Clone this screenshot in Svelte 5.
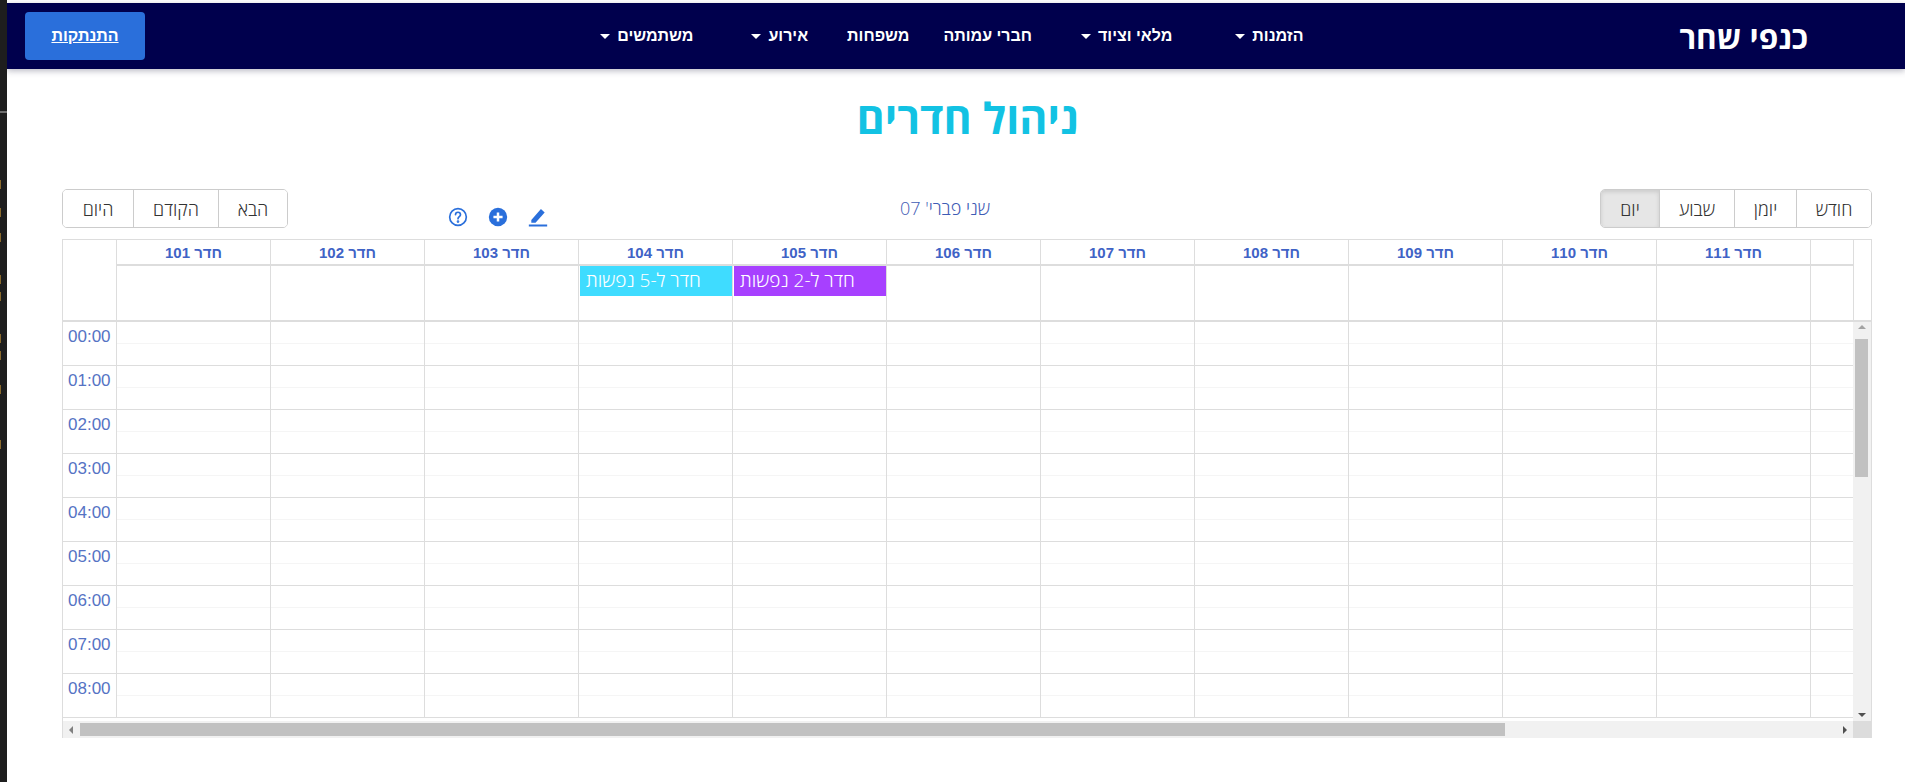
<script>
	const navItems = [
		{ label: 'הזמנות', caret: true },
		{ label: 'מלאי וציוד', caret: true },
		{ label: 'חברי עמותה', caret: false },
		{ label: 'משפחות', caret: false },
		{ label: 'אירוע', caret: true },
		{ label: 'משתמשים', caret: true }
	];

	const rooms = [101, 102, 103, 104, 105, 106, 107, 108, 109, 110, 111];
	const hours = ['00:00', '01:00', '02:00', '03:00', '04:00', '05:00', '06:00', '07:00', '08:00'];
	const events = { 104: { title: 'חדר ל-5 נפשות', color: '#3fdcff' }, 105: { title: 'חדר ל-2 נפשות', color: '#a740ff' } };

	// bits of the editor window showing behind the page
	const marks = [180, 208, 233, 275, 292, 334, 351, 385, 440];
</script>

<div class="desktop">
	<aside class="behind">
		<span class="behind-bar"></span>
		{#each marks as top}
			<span class="mark" style="top: {top}px"></span>
		{/each}
	</aside>

	<div class="page">
		<nav class="navbar" dir="rtl">
			<a class="brand" href="#top">כנפי שחר</a>
			<ul class="menu">
				{#each navItems as item}
					<li class="menu-item" class:has-caret={item.caret}>
						{item.label}
						{#if item.caret}<span class="caret"></span>{/if}
					</li>
				{/each}
			</ul>
			<a class="logout" href="#top">התנתקות</a>
		</nav>

		<h1 class="title" dir="rtl">ניהול חדרים</h1>

		<section class="calendar">
			<div class="toolbar">
				<div class="btn-group">
					<button class="w-today" dir="rtl">היום</button>
					<button class="w-prev" dir="rtl">הקודם</button>
					<button class="w-next" dir="rtl">הבא</button>
				</div>

				<div class="actions">
					<svg width="20" height="20" viewBox="0 0 24 24" fill="none" stroke="#2a6fdb" stroke-width="2">
						<circle cx="12" cy="12" r="10" />
						<path d="M9 9.3a3 3 0 0 1 6 0c0 2-3 2.4-3 4.7" stroke-linecap="round" />
						<circle cx="12" cy="17.5" r="0.6" fill="#2a6fdb" />
					</svg>
					<svg width="20" height="20" viewBox="0 0 24 24">
						<circle cx="12" cy="12" r="11" fill="#2a6fdb" />
						<path d="M12 6.5v11M6.5 12h11" stroke="#fff" stroke-width="3" />
					</svg>
					<svg width="20" height="20" viewBox="0 0 24 24" fill="#2a6fdb">
						<path d="M4 15.5 15.5 2.5l4.5 4L9 19H4z" />
						<path d="M1 21h22v2.4H1z" />
					</svg>
				</div>

				<div class="date" dir="rtl">שני פברי' 07</div>

				<div class="btn-group views">
					<button class="w-day active" dir="rtl">יום</button>
					<button class="w-week" dir="rtl">שבוע</button>
					<button class="w-agenda" dir="rtl">יומן</button>
					<button class="w-month" dir="rtl">חודש</button>
				</div>
			</div>

			<div class="grid">
				<div class="head-row">
					<div class="axis"></div>
					{#each rooms as room}
						<div class="room-head" dir="rtl">חדר {room}</div>
					{/each}
					<div class="filler"></div>
				</div>

				<div class="allday-row">
					<div class="axis"></div>
					{#each rooms as room}
						<div class="allday-cell">
							{#if events[room]}
								<div class="event" dir="rtl" style="background: {events[room].color}">{events[room].title}</div>
							{/if}
						</div>
					{/each}
					<div class="filler"></div>
				</div>

				<div class="body">
					<div class="scroll-area">
						{#each hours as hour}
							<div class="hour-row">
								<div class="axis time">{hour}</div>
								{#each rooms as room}
									<div class="slot"></div>
								{/each}
								<div class="slot last"></div>
							</div>
						{/each}
					</div>
					<div class="vscroll">
						<span class="arrow up"></span>
						<span class="vthumb"></span>
						<span class="arrow down"></span>
					</div>
				</div>

				<div class="hscroll">
					<span class="arrow left"></span>
					<div class="htrack"><span class="hthumb"></span></div>
					<span class="arrow right"></span>
					<span class="corner"></span>
				</div>
			</div>
		</section>
	</div>
</div>

<style>
	:global(body) {
		margin: 0;
		background: #fff;
	}

	.desktop {
		display: flex;
		height: 782px;
		overflow: hidden;
		font-family: 'Open Sans', 'Liberation Sans', sans-serif;
	}

	.behind {
		position: relative;
		width: 7px;
		flex-shrink: 0;
		background: #1e1e1e;
	}

	.behind-bar {
		position: absolute;
		top: 111px;
		left: 0;
		width: 7px;
		height: 2px;
		background: #6e6e6e;
	}

	.mark {
		position: absolute;
		left: 0;
		width: 1px;
		height: 9px;
		background: #8a6a2c;
	}

	.page {
		flex: 1;
		min-width: 0;
		padding-top: 3px;
	}

	.navbar {
		display: flex;
		align-items: center;
		height: 66px;
		background: #00004d;
		box-shadow: 0 2px 6px rgba(60, 60, 90, 0.35);
	}

	.brand {
		margin-right: 97px;
		width: 130px;
		color: #fff;
		font-size: 31.5px;
		font-weight: 700;
		text-decoration: none;
		white-space: nowrap;
	}

	.menu {
		display: flex;
		align-items: center;
		list-style: none;
		margin: 0 345px 0 0;
		padding: 0;
	}

	.menu-item {
		display: flex;
		align-items: center;
		padding: 0 14.5px;
		color: #fff;
		font-family: 'Liberation Sans', sans-serif;
		font-size: 16px;
		font-weight: 700;
		white-space: nowrap;
	}

	.menu-item.has-caret {
		padding: 0 29.5px;
	}

	/* the dropdown items are not evenly spaced */
	.menu-item:nth-child(2) { margin-right: 4px; }
	.menu-item:nth-child(3) { margin-right: 5px; }
	.menu-item:nth-child(4) { margin-right: 5px; }
	.menu-item:nth-child(5) { margin-right: -5px; }
	.menu-item:nth-child(6) { margin-right: -1px; }

	.caret {
		margin-right: 7px;
		border-top: 5px solid #fff;
		border-left: 5px solid transparent;
		border-right: 5px solid transparent;
	}

	.logout {
		display: flex;
		align-items: center;
		justify-content: center;
		margin-right: auto;
		margin-left: 18px;
		width: 120px;
		height: 48px;
		background: #2a6fdb;
		border-radius: 4px;
		color: #fff;
		font-family: 'Liberation Sans', sans-serif;
		font-size: 16px;
		font-weight: 700;
		text-decoration: underline;
	}

	.title {
		margin: 0;
		padding: 22px 0 0 23px;
		height: 98px;
		text-align: center;
		color: #12c2e3;
		font-size: 43px;
		font-weight: 700;
		line-height: 54px;
	}

	.calendar {
		margin-left: 55px;
		width: 1810px;
	}

	.toolbar {
		position: relative;
		display: flex;
		align-items: flex-start;
		height: 50px;
	}

	.btn-group {
		display: flex;
		height: 39px;
		box-sizing: border-box;
		border: 1px solid #ccc;
		border-radius: 5px;
		overflow: hidden;
	}

	.btn-group button {
		box-sizing: border-box;
		padding: 0;
		background: #fff;
		border: none;
		color: #333;
		font-family: inherit;
		font-size: 18px;
		font-weight: 300;
	}

	.btn-group button + button {
		border-left: 1px solid #ccc;
	}

	.w-today { width: 70px; }
	.w-prev { width: 85px; }
	.w-next { width: 69px; }
	.w-day { width: 58px; }
	.w-week { width: 75px; }
	.w-agenda { width: 62px; }
	.w-month { width: 75px; }

	.btn-group button.active {
		background: #e6e6e6;
		box-shadow: inset 0 2px 4px rgba(0, 0, 0, 0.12);
	}

	.actions {
		display: flex;
		gap: 20px;
		margin: 18px 0 0 160px;
		height: 20px;
	}

	.actions svg {
		display: block;
	}

	.date {
		position: absolute;
		left: 838px;
		top: 7px;
		color: #3f5cb5;
		font-size: 18px;
		font-weight: 300;
	}

	.views {
		margin-left: auto;
	}

	.grid {
		height: 499px;
		box-sizing: border-box;
		border: 1px solid #ddd;
	}

	.head-row,
	.allday-row,
	.hour-row {
		display: flex;
	}

	.head-row {
		height: 26px;
	}

	.allday-row {
		height: 56px;
		box-sizing: border-box;
		border-bottom: 2px solid #ddd;
	}

	.axis {
		width: 54px;
		flex-shrink: 0;
		box-sizing: border-box;
		border-right: 1px solid #ddd;
	}

	.room-head,
	.allday-cell,
	.slot {
		width: 154px;
		flex-shrink: 0;
		box-sizing: border-box;
		border-right: 1px solid #ddd;
	}

	.room-head {
		border-bottom: 2px solid #ddd;
		text-align: center;
		color: #3f63c6;
		font-family: 'Liberation Sans', sans-serif;
		font-size: 15px;
		font-weight: 700;
		line-height: 26px;
	}

	.allday-cell {
		padding-left: 1px;
	}

	.event {
		height: 30px;
		padding: 0 6px;
		color: #fff;
		font-size: 19px;
		font-weight: 300;
		line-height: 29px;
		text-align: left;
		white-space: nowrap;
	}

	.filler {
		width: 43px;
		box-sizing: border-box;
		border-right: 1px solid #ddd;
	}

	.head-row .filler {
		border-bottom: 2px solid #ddd;
	}

	.body {
		display: flex;
		height: 399px;
	}

	.scroll-area {
		flex: 1;
		min-width: 0;
		overflow: hidden;
	}

	.hour-row {
		height: 44px;
		box-sizing: border-box;
		border-bottom: 1px solid #ddd;
	}

	.time {
		padding: 4px 0 0 5px;
		color: #5573c4;
		font-family: 'Liberation Sans', sans-serif;
		font-size: 17px;
		line-height: 22px;
	}

	.slot {
		background: linear-gradient(#fff 21px, #f5f5f5 21px, #f5f5f5 22px, #fff 22px);
	}

	.slot.last {
		flex: 1;
		border-right: none;
	}

	.vscroll {
		position: relative;
		width: 18px;
		flex-shrink: 0;
		background: #f1f1f1;
	}

	.vthumb {
		position: absolute;
		top: 17px;
		left: 2px;
		width: 13px;
		height: 138px;
		background: #c1c1c1;
	}

	.arrow {
		position: absolute;
		width: 0;
		height: 0;
		border: 4px solid transparent;
	}

	.arrow.up {
		top: 3px;
		left: 5px;
		border-top: none;
		border-bottom-color: #a3a3a3;
	}

	.arrow.down {
		bottom: 4px;
		left: 5px;
		border-bottom: none;
		border-top-color: #505050;
	}

	.hscroll {
		position: relative;
		display: flex;
		height: 17px;
		background: #f1f1f1;
	}

	.arrow.left {
		top: 5px;
		left: 6px;
		border-left: none;
		border-right-color: #808080;
	}

	.arrow.right {
		top: 5px;
		right: 24px;
		border-right: none;
		border-left-color: #505050;
	}

	.htrack {
		flex: 1;
		padding: 2px 0 0 17px;
	}

	.hthumb {
		display: block;
		width: 1425px;
		height: 13px;
		background: #c1c1c1;
	}

	.corner {
		width: 18px;
		background: #dcdcdc;
	}
</style>
